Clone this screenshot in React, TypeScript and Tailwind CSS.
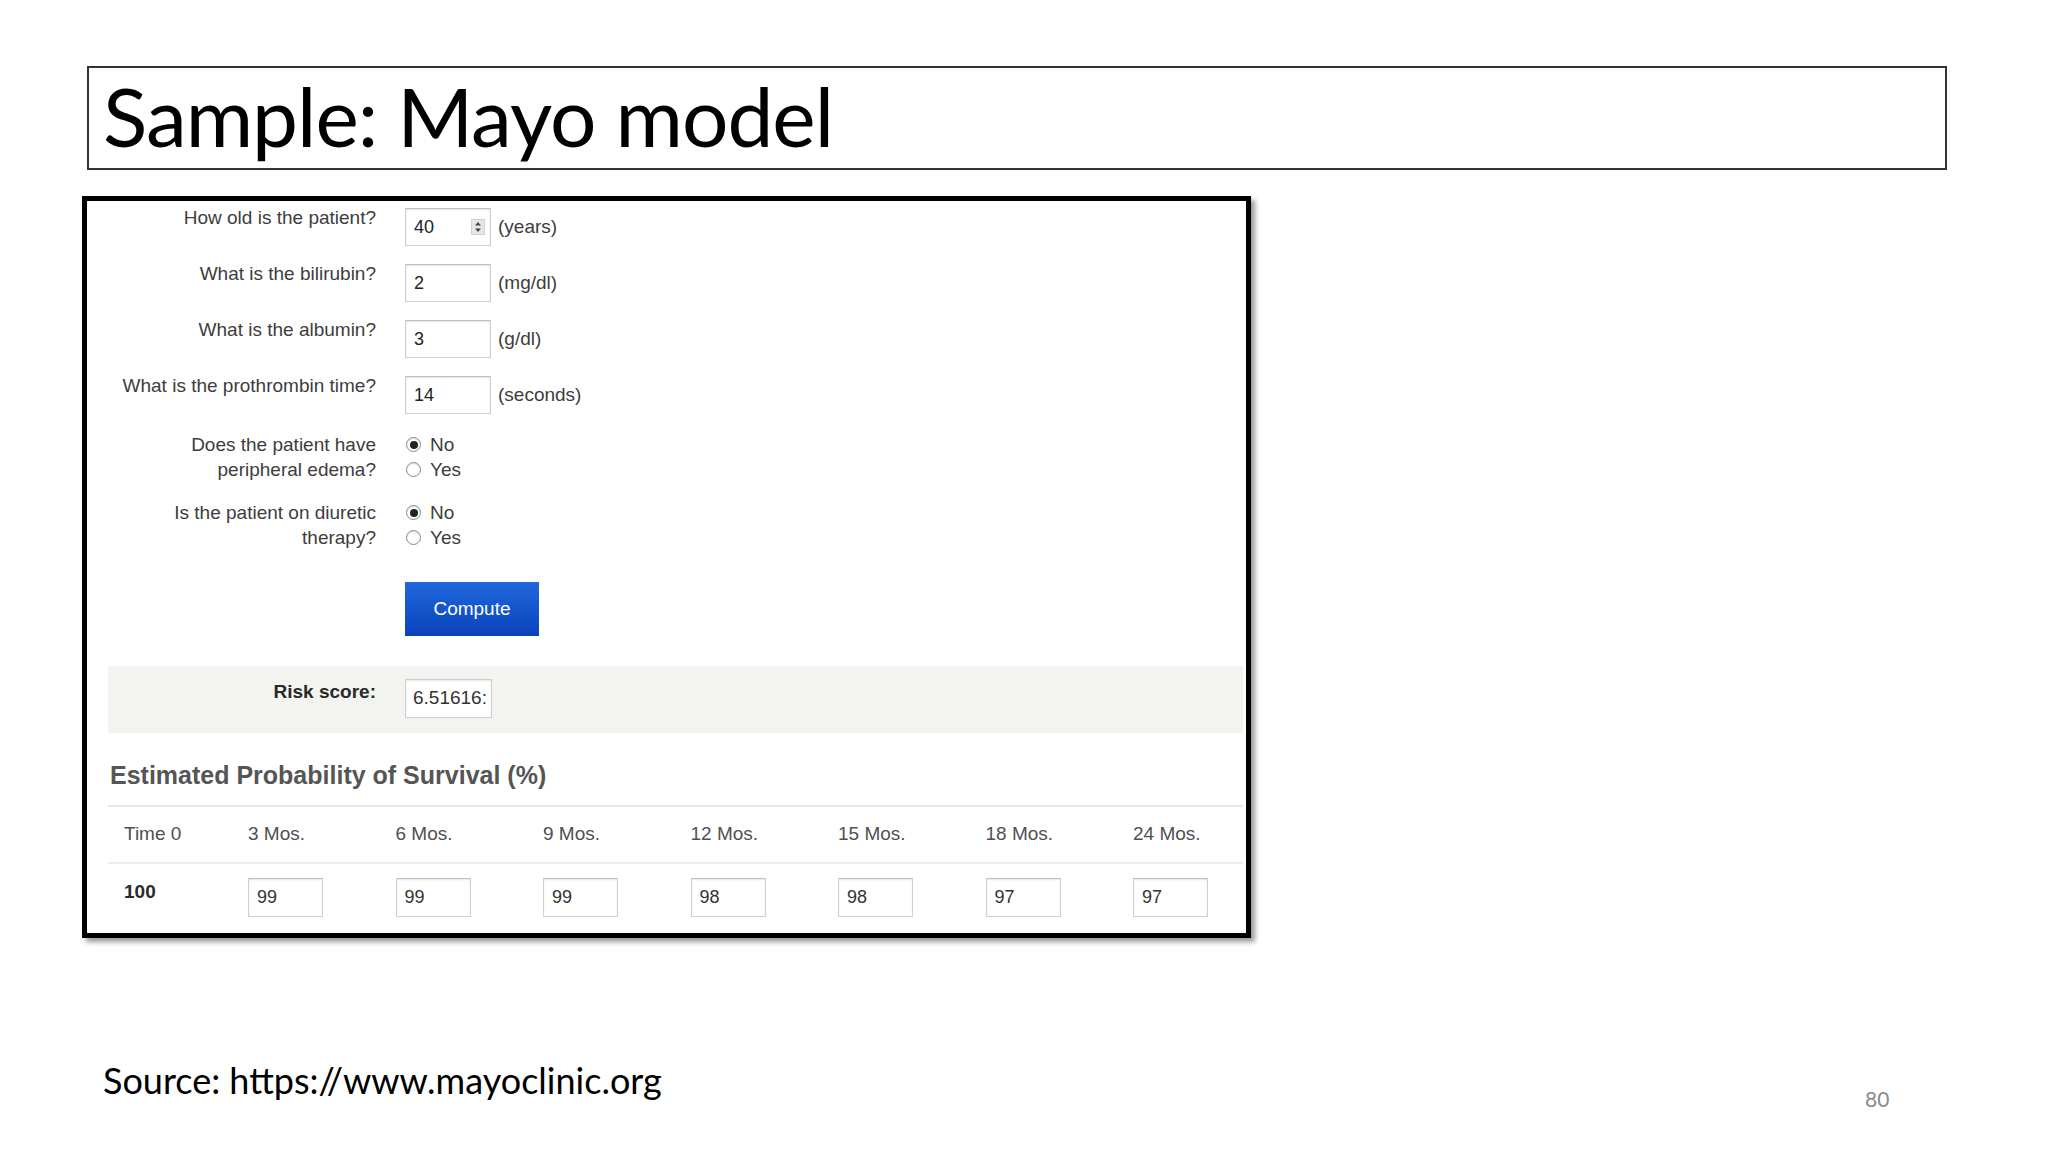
import React from "react";

const labelCls =
  "w-[268px] shrink-0 text-right text-[19px] leading-[20px] text-[#3d3d3d]";
const inputCls =
  "w-[86px] h-[38px] border border-[#cfcfcf] border-t-[#bdbdbd] bg-white shadow-[inset_0_1px_2px_rgba(0,0,0,0.12)] flex items-center pl-[8px] text-[18px] text-[#222]";

function Spinner() {
  return (
    <svg width="14" height="16" viewBox="0 0 14 16" className="ml-auto mr-[5px]">
      <rect x="0.5" y="0.5" width="13" height="15" fill="#e6e6e6" stroke="#d0d0d0" />
      <path d="M4 6.5 L7 3 L10 6.5 Z" fill="#444" />
      <path d="M4 9.5 L7 13 L10 9.5 Z" fill="#444" />
    </svg>
  );
}

function TextRow({ label, value, unit, spinner }: { label: string; value: string; unit: string; spinner?: boolean }) {
  return (
    <div className="flex items-start">
      <div className={labelCls}>{label}</div>
      <div className="ml-[29px] flex items-center">
        <div className={inputCls}>
          <span>{value}</span>
          {spinner ? <Spinner /> : null}
        </div>
        <span className="ml-[7px] text-[19px] text-[#3d3d3d]">{unit}</span>
      </div>
    </div>
  );
}

function Radio({ checked }: { checked?: boolean }) {
  return (
    <span className="w-[15px] h-[15px] rounded-full border border-[#8a8a8a] bg-white flex items-center justify-center shadow-[inset_0_1px_1px_rgba(0,0,0,0.15)]">
      {checked ? <span className="w-[8px] h-[8px] rounded-full bg-[#222]" /> : null}
    </span>
  );
}

function RadioRow({ l1, l2 }: { l1: string; l2: string }) {
  return (
    <div className="flex items-start">
      <div className="w-[268px] shrink-0 text-right text-[19px] leading-[25px] text-[#3d3d3d]">
        <div>{l1}</div>
        <div>{l2}</div>
      </div>
      <div className="ml-[29px] text-[19px] leading-[25px] text-[#3d3d3d]">
        <div className="flex items-center gap-[9px] pl-[1px]">
          <Radio checked />
          <span>No</span>
        </div>
        <div className="flex items-center gap-[9px] pl-[1px]">
          <Radio />
          <span>Yes</span>
        </div>
      </div>
    </div>
  );
}

export default function App() {
  const cols = ["Time 0", "3 Mos.", "6 Mos.", "9 Mos.", "12 Mos.", "15 Mos.", "18 Mos.", "24 Mos."];
  const vals = ["99", "99", "99", "98", "98", "97", "97"];
  return (
    <div className="w-[2048px] h-[1152px] bg-white overflow-hidden relative font-['Liberation_Sans',Arial,sans-serif]">
      <div className="pt-[66px] pl-[87px]">
        <div className="w-[1860px] h-[104px] border-2 border-[#333] flex items-center pl-[14px]">
          <span className="font-['Lato','Open_Sans',sans-serif] text-[82px] leading-none text-black tracking-[-1px] mt-[-6px]">
            Sample: Mayo model
          </span>
        </div>
      </div>

      <div className="ml-[82px] mt-[26px] w-[1169px] h-[742px] border-[5px] border-black bg-white shadow-[4px_4px_5px_rgba(0,0,0,0.4)] pl-[21px] pr-[3px] pt-[7px]">
        <div className="flex flex-col gap-[18px]">
          <TextRow label="How old is the patient?" value="40" unit="(years)" spinner />
          <TextRow label="What is the bilirubin?" value="2" unit="(mg/dl)" />
          <TextRow label="What is the albumin?" value="3" unit="(g/dl)" />
          <TextRow label="What is the prothrombin time?" value="14" unit="(seconds)" />
          <RadioRow l1="Does the patient have" l2="peripheral edema?" />
          <RadioRow l1="Is the patient on diuretic" l2="therapy?" />
        </div>

        <div className="ml-[297px] mt-[32px] w-[134px] h-[54px] bg-gradient-to-b from-[#2068dc] to-[#0b42bc] flex items-center justify-center text-white text-[19px]">
          Compute
        </div>

        <div className="mt-[30px] h-[67px] bg-[#f3f3ef] flex items-start">
          <div className="w-[268px] shrink-0 text-right text-[19px] leading-[20px] font-bold text-[#2a2a2a] pt-[16px]">
            Risk score:
          </div>
          <div className="ml-[29px] mt-[13px] w-[87px] h-[39px] border border-[#cfcfcf] bg-white shadow-[inset_0_1px_2px_rgba(0,0,0,0.1)] flex items-center pl-[7px] text-[19px] text-[#333] overflow-hidden whitespace-nowrap">
            6.51616:
          </div>
        </div>

        <div className="mt-[28px] pl-[2px] text-[25px] leading-[28px] font-bold text-[#555]">
          Estimated Probability of Survival (%)
        </div>
        <div className="mt-[16px] h-[2px] bg-[#e6e6e6]" />

        <div className="grid grid-cols-[124px_repeat(7,147.5px)] pl-[16px] h-[55px] items-center text-[19px] text-[#505050]">
          {cols.map((c) => (
            <div key={c}>{c}</div>
          ))}
        </div>
        <div className="h-[2px] bg-[#ececec]" />

        <div className="grid grid-cols-[124px_repeat(7,147.5px)] pl-[16px] pt-[14px] items-start">
          <div className="text-[19px] font-bold text-[#2a2a2a] leading-[25px] pt-[1px]">100</div>
          {vals.map((v, i) => (
            <div
              key={i}
              className="w-[75px] h-[39px] border border-[#d0d0d0] border-t-[#c0c0c0] bg-white shadow-[inset_0_1px_2px_rgba(0,0,0,0.1)] flex items-center pl-[8px] text-[18px] text-[#333]"
            >
              {v}
            </div>
          ))}
        </div>
      </div>

      <div className="pl-[103px] mt-[124px] font-['Lato','Open_Sans',sans-serif] text-[36px] leading-none text-black">
        Source: https://www.mayoclinic.org
      </div>
      <div className="absolute left-[1865px] top-[1088px] font-['Lato','Open_Sans',sans-serif] text-[21px] leading-none text-[#8a8a8a]">
        80
      </div>
    </div>
  );
}
